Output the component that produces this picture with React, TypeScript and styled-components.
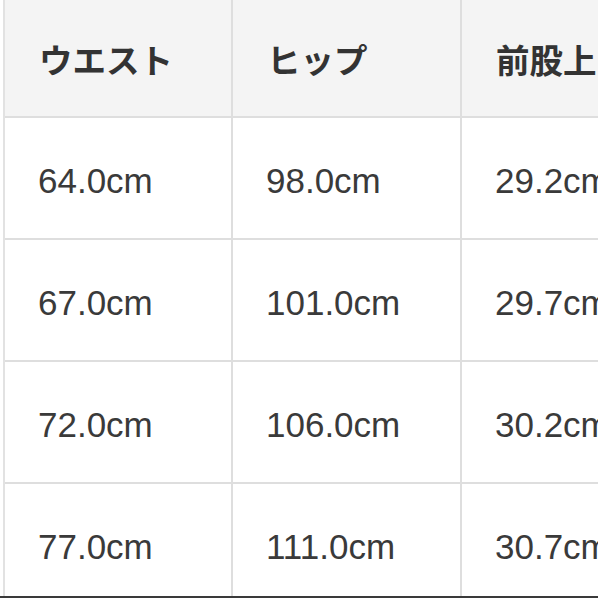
import React from "react"
import styled, { createGlobalStyle } from "styled-components"

const GlobalStyle = createGlobalStyle`
  html, body {
    margin: 0;
    padding: 0;
    background: #ffffff;
    overflow: hidden;
  }
`

const Frame = styled.div`
  width: 598px;
  height: 598px;
  box-sizing: border-box;
  padding-left: 3px;
  border-bottom: 2px solid #3a3a3a;
  overflow: hidden;
  background: #ffffff;
`

const Grid = styled.div`
  display: grid;
  grid-template-columns: 226px 227px 227px;
  grid-template-rows: 116px 120px 120px 120px 120px;
  gap: 2px;
  width: max-content;
  background: #dedede;
  border-left: 2px solid #e2e2e2;
`

const HeadCell = styled.div`
  background: #f4f4f4;
  box-sizing: border-box;
  padding: 42px 0 0 34px;
  font-family: "Noto Sans CJK JP", "Noto Sans", sans-serif;
  font-weight: 700;
  font-size: 33.5px;
  line-height: 33px;
  color: #333333;
  white-space: nowrap;
`

const Cell = styled.div`
  background: #ffffff;
  box-sizing: border-box;
  padding: 46px 0 0 33px;
  font-family: "Liberation Sans", Arial, sans-serif;
  font-size: 35px;
  line-height: 34px;
  color: #3a3a3a;
  white-space: nowrap;
`

const headers = ["ウエスト", "ヒップ", "前股上"]

const rows = [
  ["64.0cm", "98.0cm", "29.2cm"],
  ["67.0cm", "101.0cm", "29.7cm"],
  ["72.0cm", "106.0cm", "30.2cm"],
  ["77.0cm", "111.0cm", "30.7cm"],
]

export default function App() {
  return (
    <>
      <GlobalStyle />
      <Frame>
        <Grid>
          {headers.map((h) => (
            <HeadCell key={h}>{h}</HeadCell>
          ))}
          {rows.map((row, i) =>
            row.map((v, j) => <Cell key={`${i}-${j}`}>{v}</Cell>)
          )}
        </Grid>
      </Frame>
    </>
  )
}
